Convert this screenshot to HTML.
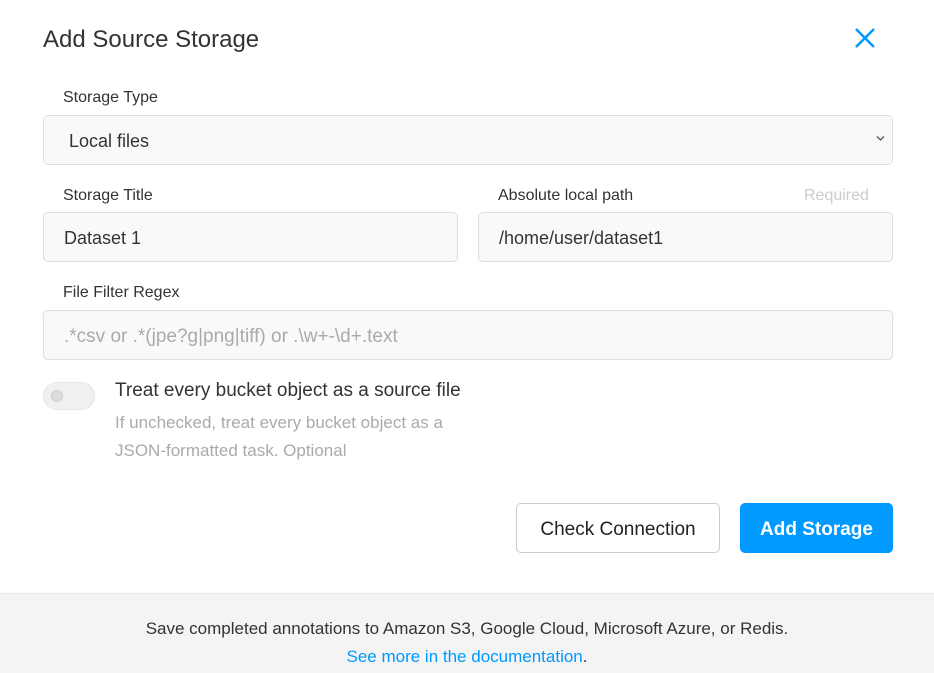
<!DOCTYPE html>
<html><head><style>
*{box-sizing:border-box;margin:0;padding:0}
body{width:934px;height:673px;background:#fff;font-family:"Liberation Sans",sans-serif;position:relative;overflow:hidden;color:#222}
.a{position:absolute}
.lbl{font-size:16px;color:#333}
.inp{position:absolute;background:#f9f9f9;border:1px solid #ddd;border-radius:5px;font-size:18px;padding-left:20px;padding-top:3px;display:flex;align-items:center;color:#333}
</style></head><body>
<div class="a" style="left:43px;top:26px;font-size:24px;color:#333">Add Source Storage</div>
<svg class="a" style="left:854px;top:27px" width="22" height="22" viewBox="0 0 22 22"><path d="M2 2L20 20M20 2L2 20" stroke="#0099ff" stroke-width="2.5"/></svg>
<div class="a lbl" style="left:63px;top:89px">Storage Type</div>
<div class="inp" style="left:43px;top:115px;width:850px;height:50px;padding-left:25px">Local files</div>
<svg class="a" style="left:876px;top:135px" width="9" height="7" viewBox="0 0 9 7"><path d="M1 1.5L4.5 5L8 1.5" stroke="#555" stroke-width="1.3" fill="none"/></svg>
<div class="a lbl" style="left:63px;top:187px">Storage Title</div>
<div class="inp" style="left:43px;top:212px;width:415px;height:50px">Dataset 1</div>
<div class="a lbl" style="left:498px;top:187px">Absolute local path</div>
<div class="a" style="left:804px;top:187px;font-size:16px;color:#ccc">Required</div>
<div class="inp" style="left:478px;top:212px;width:415px;height:50px">/home/user/dataset1</div>
<div class="a lbl" style="left:63px;top:284px">File Filter Regex</div>
<div class="inp" style="left:43px;top:310px;width:850px;height:50px;color:#aaa;font-size:19px">.*csv or .*(jpe?g|png|tiff) or .\w+-\d+.text</div>
<div class="a" style="left:43px;top:382px;width:52px;height:28px;border-radius:14px;background:#f0f0f0;border:1px solid #e6e6e6"></div>
<div class="a" style="left:51px;top:390px;width:12px;height:12px;border-radius:6px;background:#ddd;border:1px solid #ccc"></div>
<div class="a" style="left:115px;top:380px;font-size:19px;color:#333">Treat every bucket object as a source file</div>
<div class="a" style="left:115px;top:409px;font-size:17px;color:#aaa;line-height:28px">If unchecked, treat every bucket object as a<br>JSON-formatted task. Optional</div>
<div class="a" style="left:516px;top:503px;width:204px;height:50px;border:1px solid #ccc;border-radius:5px;font-size:19px;display:flex;align-items:center;justify-content:center;color:#222;padding-top:4px">Check Connection</div>
<div class="a" style="left:740px;top:503px;width:153px;height:50px;background:#0099ff;border-radius:5px;font-size:19px;font-weight:bold;display:flex;align-items:center;justify-content:center;color:#fff;padding-top:4px">Add Storage</div>
<div class="a" style="left:0;top:593px;width:934px;height:80px;background:#f4f4f4;border-top:1px solid #e6e6e6;text-align:center;font-size:17px;line-height:28px;padding-top:21px;color:#333">Save completed annotations to Amazon S3, Google Cloud, Microsoft Azure, or Redis.<br><span style="color:#0099ff">See more in the documentation</span>.</div>
</body></html>
